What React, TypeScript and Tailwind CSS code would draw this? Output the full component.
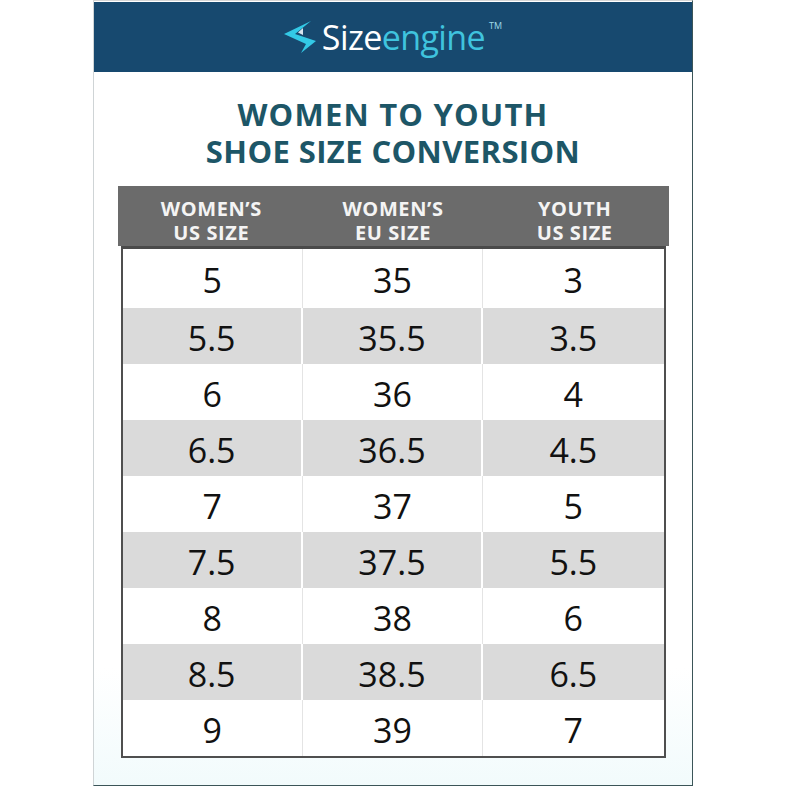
const rows: [string, string, string][] = [
  ["5", "35", "3"],
  ["5.5", "35.5", "3.5"],
  ["6", "36", "4"],
  ["6.5", "36.5", "4.5"],
  ["7", "37", "5"],
  ["7.5", "37.5", "5.5"],
  ["8", "38", "6"],
  ["8.5", "38.5", "6.5"],
  ["9", "39", "7"],
]

const heads = [
  ["WOMEN’S", "US SIZE"],
  ["WOMEN’S", "EU SIZE"],
  ["YOUTH", "US SIZE"],
]

function Logo() {
  return (
    <div className="flex items-center">
      <svg width="32" height="32" viewBox="0 0 32 32" className="mr-[6px]">
        <polygon points="27,0 0,13 22,23 17,32 32,20 11,13" fill="#33c9e6" />
        <polygon points="19,7 19,14 14,11.5" fill="#d8e4ee" />
      </svg>
      <span className="text-[34px] leading-none text-white tracking-[-0.6px]">Size</span>
      <span className="text-[34px] leading-none text-[#3fc3de] tracking-[-0.6px]">engine</span>
      <span className="text-[9px] leading-none text-[#9fd9e8] self-start mt-[1px] ml-[4px]">TM</span>
    </div>
  )
}

export default function App() {
  return (
    <div className="w-[786px] h-[786px] bg-white pl-[93px]" style={{ fontFamily: '"Open Sans", "Noto Sans", sans-serif' }}>
      <div className="w-[600px] h-[786px] border-l border-r border-b border-t border-l-[#cfd4d6] border-r-[#3b5558] border-b-[#3b5558] border-t-[#d6d6d6] pt-px bg-gradient-to-b from-white from-85% to-[#f2fbfc]">
        <div className="h-[70px] bg-[#17496f] flex items-center justify-center">
          <Logo />
        </div>
        <div className="pt-[24px] pb-[16px] text-center text-[31px] leading-[37px] font-bold text-[#1d5667]">
          <div className="tracking-[1.2px]">WOMEN TO YOUTH</div>
          <div className="tracking-[0.4px]">SHOE SIZE CONVERSION</div>
        </div>
        <div className="w-[551px] mx-auto">
          <div className="grid grid-cols-3 h-[60px] bg-[#6b6b6b] px-[3px]">
            {heads.map((h, i) => (
              <div key={i} className="flex flex-col items-center justify-center pt-[9px] text-[#f4f4f4] font-bold text-[20px] leading-[24px] tracking-[0.6px]">
                <span>{h[0]}</span>
                <span>{h[1]}</span>
              </div>
            ))}
          </div>
          <div className="mx-[3px] border-t-[3px] border-x-2 border-b-2 border-[#4f4f4f] border-t-[#4a4a4a]">
            {rows.map((r, i) => {
              const gray = i % 2 === 1
              return (
                <div key={i} className={`grid grid-cols-3 ${i === 0 ? "h-[59px]" : "h-[56px]"} ${gray ? "bg-[#dadada]" : "bg-white"}`}>
                  {r.map((v, j) => (
                    <div
                      key={j}
                      className={`flex items-center justify-center pt-[4px] text-[34px] text-[#111] ${j < 2 ? (gray ? "border-r-2 border-white" : "border-r border-[#e4e4e4]") : ""}`}
                    >
                      {v}
                    </div>
                  ))}
                </div>
              )
            })}
          </div>
        </div>
      </div>
    </div>
  )
}
